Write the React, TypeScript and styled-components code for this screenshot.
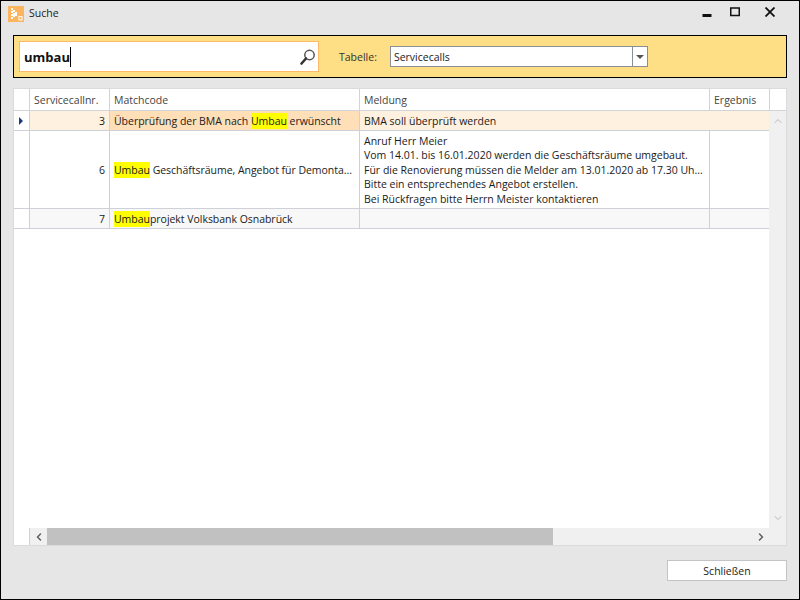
import React from 'react';
import styled, { createGlobalStyle } from 'styled-components';
import { ChevronDown, ChevronLeft, ChevronRight, ChevronUp } from 'lucide-react';

const GlobalStyle = createGlobalStyle`
	html, body {
		margin: 0;
		padding: 0;
		background: #e6e6e6;
	}
	* {
		box-sizing: border-box;
	}
`;

const Window = styled.div`
	width: 800px;
	height: 600px;
	display: flex;
	flex-direction: column;
	border: 1px solid #000;
	background: #e6e6e6;
	color: #1a1a1a;
	font-family: 'Open Sans', 'Noto Sans', sans-serif;
	font-size: 10.5px;
	overflow: hidden;
`;

const TitleBar = styled.div`
	height: 25px;
	flex: none;
	display: flex;
	align-items: center;
	padding: 1px 0 0 7px;
	gap: 5px;
`;

const TitleText = styled.span`
	flex: 1;
	font-size: 10.5px;
	margin-bottom: 2px;
`;

const WindowButton = styled.button<{ $w: number }>`
	width: ${p => p.$w}px;
	height: 25px;
	padding: 0;
	border: 0;
	background: none;
	display: flex;
	align-items: center;
	justify-content: center;
`;

const WindowButtons = styled.div`
	display: flex;
	margin-right: 12px;
	margin-top: -4px;
`;

const SearchPanel = styled.div`
	flex: none;
	height: 43px;
	margin: 9px 12px 0;
	padding: 5px;
	display: flex;
	align-items: flex-start;
	background: #ffdf85;
	border: 1px solid #000;
`;

const SearchBox = styled.div`
	width: 300px;
	height: 31px;
	display: flex;
	align-items: center;
	justify-content: space-between;
	padding: 0 1px 0 4px;
	background: #fff;
	border: 1px solid #fdba68;
`;

const SearchValue = styled.span`
	font-size: 13px;
	font-weight: 700;
	color: #111;
	border-right: 1px solid #000;
	line-height: 20px;
`;

const TableLabel = styled.label`
	margin: 9px 13px 0 20px;
	line-height: 15px;
	color: #333;
`;

const Select = styled.div`
	width: 258px;
	height: 21px;
	margin-top: 5px;
	display: flex;
	background: #fff;
	border: 1px solid #8a8f96;
`;

const SelectValue = styled.span`
	flex: 1;
	padding: 1px 0 0 3px;
	line-height: 19px;
`;

const SelectArrow = styled.span`
	width: 15px;
	display: flex;
	align-items: center;
	justify-content: center;
	border-left: 1px solid #8a8f96;

	&::after {
		content: '';
		border-top: 4px solid #555;
		border-left: 4px solid transparent;
		border-right: 4px solid transparent;
	}
`;

const Grid = styled.div`
	flex: 1;
	min-height: 0;
	margin: 10px 12px 0;
	display: flex;
	flex-direction: column;
	background: #fff;
	border: 1px solid #d9dbdf;
`;

const HeaderRow = styled.div`
	flex: none;
	height: 22px;
	display: flex;
	border-bottom: 1px solid #d0d4da;
`;

const HeaderCell = styled.div<{ $w: number }>`
	flex: none;
	width: ${p => p.$w}px;
	padding: 1px 4px 0;
	line-height: 21px;
	color: #444;
	border-right: 1px solid #d0d4da;
	white-space: nowrap;
`;

const Main = styled.div`
	flex: 1;
	min-height: 0;
	display: flex;
`;

const Rows = styled.div`
	flex: 1;
	min-width: 0;
`;

const Row = styled.div<{ $h: number; $bg?: string }>`
	height: ${p => p.$h}px;
	display: flex;
	background: ${p => p.$bg || '#fff'};
	border-bottom: 1px solid #ced2d8;
`;

const Cell = styled.div<{ $w: number; $bg?: string; $right?: boolean; $last?: boolean }>`
	flex: none;
	width: ${p => p.$w}px;
	padding: 0 4px;
	display: flex;
	align-items: center;
	justify-content: ${p => (p.$right ? 'flex-end' : 'flex-start')};
	background: ${p => p.$bg || 'transparent'};
	border-right: ${p => (p.$last ? '0' : '1px solid #ced2d8')};
	white-space: nowrap;
	overflow: hidden;
`;

const Indicator = styled(Cell)`
	padding: 0 0 0 5px;

	&::after {
		content: '';
		border-left: 4px solid #1b3a78;
		border-top: 4px solid transparent;
		border-bottom: 4px solid transparent;
	}
`;

const MatchText = styled.span`
	letter-spacing: -0.03px;
`;

const Lines = styled.div`
	line-height: 14.6px;
	padding-top: 1px;
`;

const Mark = styled.mark`
	background: #ffff00;
	color: inherit;
	padding: 1px 0;
`;

const VScroll = styled.div`
	flex: none;
	width: 17px;
	display: flex;
	flex-direction: column;
	align-items: center;
	justify-content: space-between;
	background: #f0f0f0;
	padding: 4px 0;
	color: #b8b8b8;
`;

const BottomRow = styled.div`
	flex: none;
	height: 17px;
	display: flex;
	background: #f0f0f0;
`;

const Corner = styled.div`
	width: 16px;
	background: #fff;
	border-right: 1px solid #d0d4da;
`;

const HScroll = styled.div`
	flex: 1;
	display: flex;
	align-items: center;
	margin-right: 17px;
	color: #606060;
`;

const ArrowSlot = styled.div`
	width: 17px;
	display: flex;
	justify-content: center;
`;

const Track = styled.div`
	flex: 1;
	height: 100%;
`;

const Thumb = styled.div`
	width: 506px;
	height: 100%;
	background: #c1c1c1;
`;

const Footer = styled.div`
	flex: none;
	height: 53px;
	padding: 14px 12px 0 0;
	display: flex;
	justify-content: flex-end;
`;

const CloseButton = styled.button`
	width: 120px;
	height: 21px;
	padding: 1px 0 0;
	background: #fff;
	border: 1px solid #c4c4c4;
	font: inherit;
	color: #1a1a1a;
`;

const widths = { ind: 16, nr: 80, match: 250, meldung: 350, ergebnis: 60 };

const logoDots = [
	[3, 2], [5, 4], [3, 5], [7, 6], [5, 7], [3, 8], [7, 8], [5, 9], [3, 11],
];

const LogoIcon = () => (
	<svg width="16" height="16" viewBox="0 0 16 16">
		<rect width="16" height="16" fill="#fdb45f" />
		{logoDots.map(([x, y]) => (
			<rect key={`${x}-${y}`} x={x} y={y} width="2" height="2" fill="#fff" />
		))}
		<rect x="10.5" y="10" width="4" height="4.5" fill="#fff" />
		<rect x="11.5" y="11" width="2" height="2.5" fill="#fdb45f" />
	</svg>
);

const SearchIcon = () => (
	<svg width="18" height="18" viewBox="0 0 18 18">
		<circle cx="10.5" cy="7" r="4.7" fill="#fff" stroke="#555" strokeWidth="1.5" />
		<path d="M7 10.5 L2.5 15.5" stroke="#333" strokeWidth="2.6" strokeLinecap="round" />
	</svg>
);

export default function App() {
	return (
		<>
			<GlobalStyle />
			<Window>
				<TitleBar>
					<LogoIcon />
					<TitleText>Suche</TitleText>
					<WindowButtons>
						<WindowButton $w={20} aria-label="Minimieren">
							<svg width="10" height="10" viewBox="0 0 10 10">
								<rect x="0.5" y="7" width="9" height="3" fill="#111" />
							</svg>
						</WindowButton>
						<WindowButton $w={35} aria-label="Maximieren">
							<svg width="10" height="10" viewBox="0 0 10 10">
								<rect x="0.75" y="1" width="8.5" height="7.5" fill="none" stroke="#111" strokeWidth="1.5" />
							</svg>
						</WindowButton>
						<WindowButton $w={35} aria-label="Schließen">
							<svg width="10" height="10" viewBox="0 0 10 10">
								<path d="M0.5 0.5 L9.5 9.5 M9.5 0.5 L0.5 9.5" stroke="#111" strokeWidth="1.8" />
							</svg>
						</WindowButton>
					</WindowButtons>
				</TitleBar>
				<SearchPanel>
					<SearchBox>
						<SearchValue>umbau</SearchValue>
						<SearchIcon />
					</SearchBox>
					<TableLabel>Tabelle:</TableLabel>
					<Select>
						<SelectValue>Servicecalls</SelectValue>
						<SelectArrow />
					</Select>
				</SearchPanel>
				<Grid>
					<HeaderRow>
						<HeaderCell $w={widths.ind} />
						<HeaderCell $w={widths.nr}>Servicecallnr.</HeaderCell>
						<HeaderCell $w={widths.match}>Matchcode</HeaderCell>
						<HeaderCell $w={widths.meldung}>Meldung</HeaderCell>
						<HeaderCell $w={widths.ergebnis}>Ergebnis</HeaderCell>
					</HeaderRow>
					<Main>
						<Rows>
							<Row $h={20} $bg="#fff1e0">
								<Indicator $w={widths.ind} $bg="#fff" />
								<Cell $w={widths.nr} $right>3</Cell>
								<Cell $w={widths.match} $bg="#ffdfb8">
									<MatchText>Überprüfung der BMA nach <Mark>Umbau</Mark> erwünscht</MatchText>
								</Cell>
								<Cell $w={widths.meldung + widths.ergebnis} $last>BMA soll überprüft werden</Cell>
							</Row>
							<Row $h={78}>
								<Cell $w={widths.ind} />
								<Cell $w={widths.nr} $right>6</Cell>
								<Cell $w={widths.match}>
									<MatchText><Mark>Umbau</Mark> Geschäftsräume, Angebot für Demonta...</MatchText>
								</Cell>
								<Cell $w={widths.meldung}>
									<Lines>
										Anruf Herr Meier<br />
										Vom 14.01. bis 16.01.2020 werden die Geschäftsräume umgebaut.<br />
										Für die Renovierung müssen die Melder am 13.01.2020 ab 17.30 Uh...<br />
										Bitte ein entsprechendes Angebot erstellen.<br />
										Bei Rückfragen bitte Herrn Meister kontaktieren
									</Lines>
								</Cell>
								<Cell $w={widths.ergebnis} />
							</Row>
							<Row $h={20} $bg="#f8f8f8">
								<Cell $w={widths.ind} $bg="#fff" />
								<Cell $w={widths.nr} $right>7</Cell>
								<Cell $w={widths.match}>
									<MatchText><Mark>Umbau</Mark>projekt Volksbank Osnabrück</MatchText>
								</Cell>
								<Cell $w={widths.meldung} />
								<Cell $w={widths.ergebnis} />
							</Row>
						</Rows>
						<VScroll>
							<ChevronUp size={12} />
							<ChevronDown size={12} />
						</VScroll>
					</Main>
					<BottomRow>
						<Corner />
						<HScroll>
							<ArrowSlot><ChevronLeft size={12} strokeWidth={3} /></ArrowSlot>
							<Track><Thumb /></Track>
							<ArrowSlot><ChevronRight size={12} strokeWidth={3} /></ArrowSlot>
						</HScroll>
					</BottomRow>
				</Grid>
				<Footer>
					<CloseButton>Schließen</CloseButton>
				</Footer>
			</Window>
		</>
	);
}
